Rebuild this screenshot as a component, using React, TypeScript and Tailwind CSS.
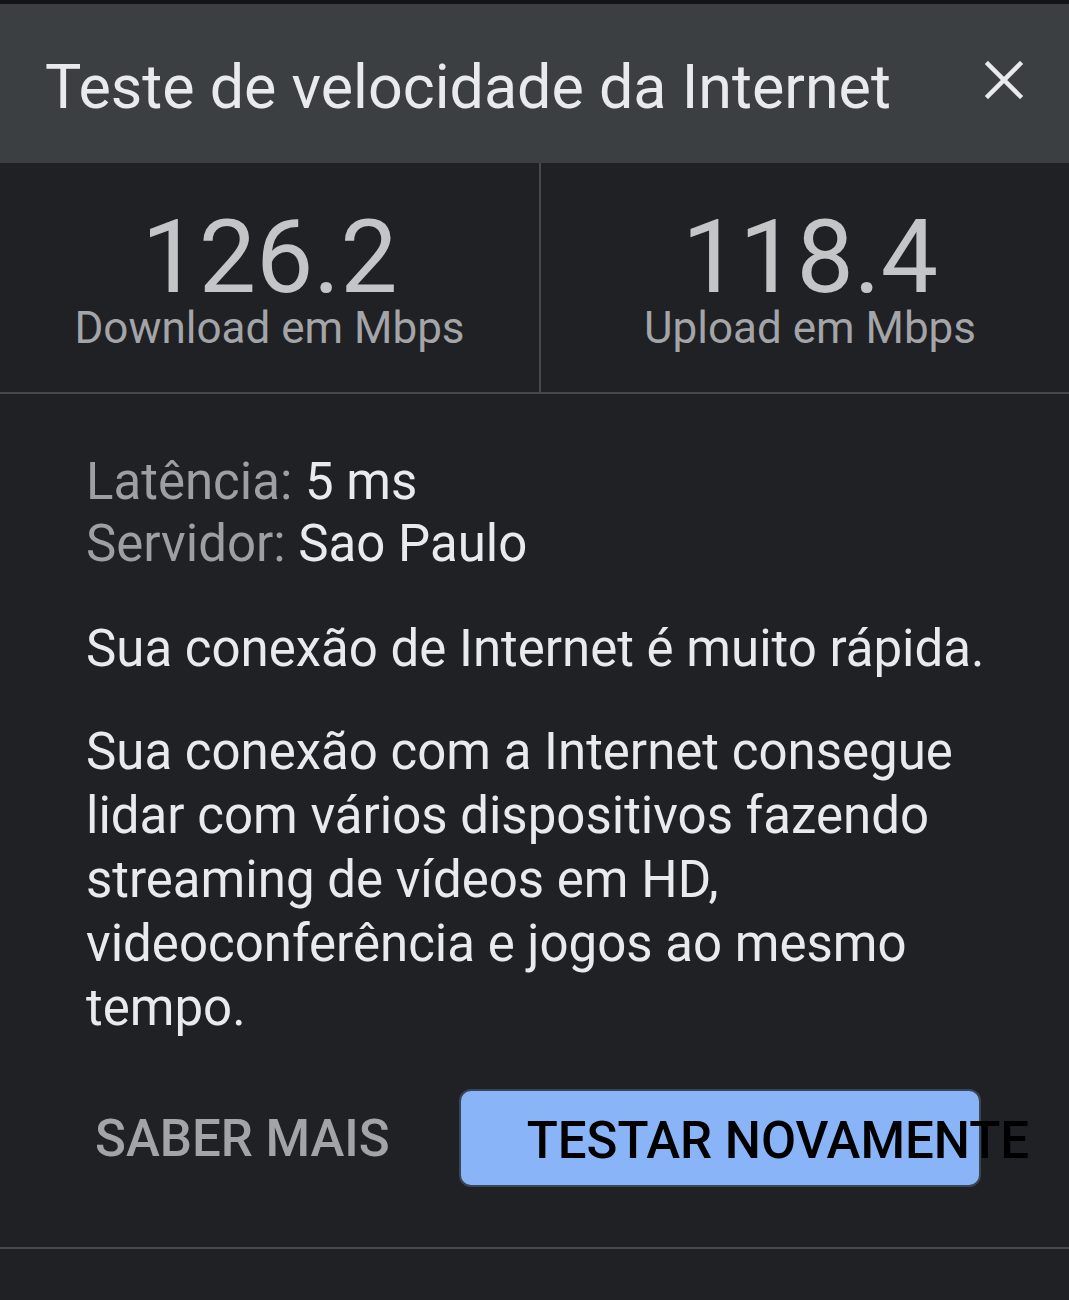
import React from "react";

const Stat: React.FC<{ value: string; label: string; className?: string }> = ({ value, label, className }) => (
	<div className={`flex flex-col items-center pt-[44px] ${className ?? ""}`}>
		<div className="text-[102px] leading-[100px] text-[#c4c5c7]">{value}</div>
		<div className="mt-[1px] text-[44px] leading-[40px] text-[#a3a5a8]">{label}</div>
	</div>
);

const App: React.FC = () => {
	return (
		<div className="w-[1069px] h-[1300px] bg-[#202124] overflow-hidden" style={{ fontFamily: "Roboto, 'Noto Sans', sans-serif" }}>
			{/* status strip */}
			<div className="h-[4px] bg-[#131417]"></div>

			{/* header */}
			<div className="h-[159px] bg-[#3c3f42] flex justify-between items-start pl-[45px] pr-[46px]">
				<h1 className="pt-[53px] text-[61px] leading-none text-[#e8eaed] font-normal">Teste de velocidade da Internet</h1>
				<button className="mt-[57px] w-[38px] h-[38px]" aria-label="Fechar">
					<svg viewBox="0 0 38 38" width="38" height="38">
						<path d="M3 3 L35 35 M35 3 L3 35" stroke="#e8eaed" strokeWidth="4.5" strokeLinecap="square" />
					</svg>
				</button>
			</div>

			{/* results */}
			<div className="h-[231px] flex border-b-2 border-[#47484b]">
				<Stat value="126.2" label="Download em Mbps" className="w-[541px] border-r-2 border-[#47484b]" />
				<Stat value="118.4" label="Upload em Mbps" className="flex-1 pl-[10px]" />
			</div>

			{/* details */}
			<div className="pl-[86px] pr-[60px]">
				<div className="pt-[57px] text-[51px] leading-[62px]">
					<div>
						<span className="text-[#9d9fa3]">Latência: </span>
						<span className="text-[#e8eaed]">5 ms</span>
					</div>
					<div>
						<span className="text-[#9d9fa3]">Servidor: </span>
						<span className="text-[#e8eaed]">Sao Paulo</span>
					</div>
				</div>
				<p className="mt-[42px] text-[51px] leading-[64px] text-[#e8eaed]">Sua conexão de Internet é muito rápida.</p>
				<p className="mt-[39px] text-[51px] leading-[64px] text-[#e8eaed]">
					Sua conexão com a Internet consegue lidar com vários dispositivos fazendo streaming de vídeos em HD, videoconferência e jogos ao mesmo tempo.
				</p>

				<div className="mt-[49px] flex items-center">
					<button className="ml-[9px] text-[51px] leading-none font-medium text-[#a2a4a7] whitespace-nowrap">SABER MAIS</button>
					<button className="ml-[69px] w-[522px] h-[98px] shrink-0 flex items-center pt-[4px] pl-[66px] rounded-[12px] bg-[#8ab4f8] border-2 border-[#3a4658] text-[51px] leading-none font-medium text-black whitespace-nowrap overflow-visible">
						TESTAR NOVAMENTE
					</button>
				</div>
			</div>

			<div className="mt-[60px] border-t-2 border-[#47484b]"></div>
		</div>
	);
};

export default App;
